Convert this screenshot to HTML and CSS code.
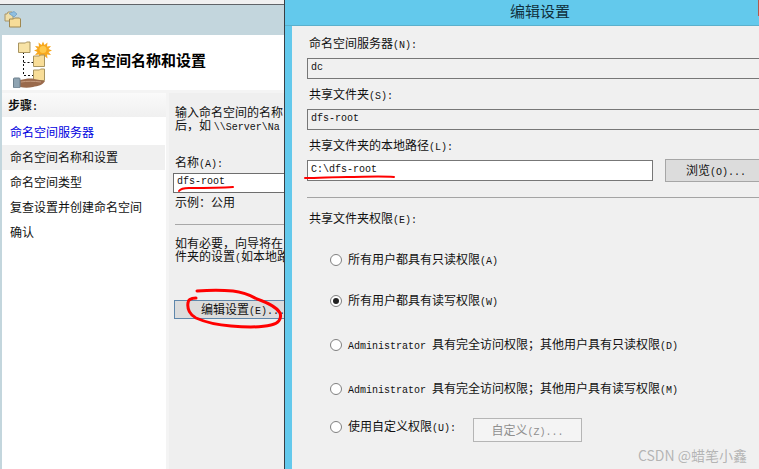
FILE: index.html
```html
<!DOCTYPE html>
<html lang="zh-CN">
<head>
    <meta charset="UTF-8">
    <meta name="viewport" content="width=device-width, initial-scale=1.0">
    <title>编辑设置</title>
    <link rel="stylesheet" href="styles.css">
</head>
<body>
    <!-- wizard behind the dialog -->
    <div class="wizard">
        <div class="wizard-top"></div>
        <div class="toolbar">
            <svg class="toolbar-icon" width="18" height="18" viewBox="0 0 18 18">
                <path d="M1 4h2l1-2h4l1 1v8H1z" fill="#f0dfa8" stroke="#a8966a"/>
                <path d="M5 3.500l5-2 3 2.500-3 3z" fill="#8fbfe0" stroke="#6a9ac0" stroke-width=".7"/>
                <path d="M5.500 9h4l1-1h5l1 1v8h-11z" fill="#f6dc98" stroke="#a08850"/>
            </svg>
        </div>
        <div class="wizard-head">
            <svg class="head-icon" width="44" height="48" viewBox="0 0 44 48">
                <path d="M11.500 12v23.500h10M11.500 22.500h10" fill="none" stroke="#111" stroke-dasharray="2 2"/>
                <path d="M31 1.500l1.500 3.500 3-2.500-.5 4 4-.5-2.500 3 3.500 1.500-3.500 1.500 2.500 3-4-.5.5 4-3-2.500-1.500 3.500-1.500-3.500-3 2.500.5-4-4 .5 2.500-3-3.500-1.500 3.500-1.500-2.500-3 4 .5-.5-4 3 2.500z" fill="#f7a81e"/>
                <circle cx="31" cy="9.500" r="3.500" fill="#ffc94a"/>
                <path d="M6.500 3h7l1-1h3.500v10.500H6.500z" fill="#f8e3a6" stroke="#a89460"/>
                <path d="M21.500 16h6l1-1h4v11.500h-11z" fill="#f8dd98" stroke="#a89460"/>
                <path d="M21.500 30h6l1-1h4v11.500h-11z" fill="#f8dd98" stroke="#a89460"/>
                <path d="M8 40c5-1 10-2 14-1l11 2c-2 4-7 5-12 6-4 1-9 1-13 0z" fill="#9a6a4c"/>
                <path d="M9 42c6-1 12-1 20 0" fill="none" stroke="#c69c80"/>
                <rect x="1.500" y="38" width="6.500" height="10" rx="1" fill="#8fa4b2" stroke="#6c7f8c"/>
            </svg>
            <h1 class="wizard-title">命名空间名称和设置</h1>
        </div>
        <div class="wizard-main">
            <div class="steps">
                <div class="steps-head">步骤<span class="lat">:</span></div>
                <div class="step step-link">命名空间服务器</div>
                <div class="step step-active">命名空间名称和设置</div>
                <div class="step">命名空间类型</div>
                <div class="step">复查设置并创建命名空间</div>
                <div class="step">确认</div>
            </div>
            <div class="wizard-pane">
                <p class="pane-text">输入命名空间的名称</p>
                <p class="pane-text">后&#xFF0C;如 <span class="lat">\\Server\Na</span></p>
                <div class="pane-label">名称<span class="lat">(A):</span></div>
                <div class="name-input lat">dfs-root</div>
                <div class="pane-example">示例&#xFF1A;公用</div>
                <div class="pane-rule"></div>
                <p class="pane-text">如有必要&#xFF0C;向导将在</p>
                <p class="pane-text">件夹的设置<span class="lat">(</span>如本地路</p>
                <button type="button" class="edit-btn">编辑设置<span class="lat">(E)...</span></button>
            </div>
        </div>
    </div>

    <div class="dialog">
        <div class="dialog-title">编辑设置<span class="close-sliver"></span></div>
        <div class="dialog-body">
            <div class="field-label">命名空间服务器<span class="lat">(N):</span></div>
            <div class="field lat">dc</div>
            <div class="field-label">共享文件夹<span class="lat">(S):</span></div>
            <div class="field lat">dfs-root</div>
            <div class="field-label">共享文件夹的本地路径<span class="lat">(L):</span></div>
            <div class="path-row">
                <div class="field field-white lat">C:\dfs-root</div>
                <button type="button" class="browse-btn">浏览<span class="lat">(O)...</span></button>
            </div>
            <div class="dialog-rule"></div>
            <div class="field-label field-label-perm">共享文件夹权限<span class="lat">(E):</span></div>

            <div class="radio-row radio-first"><span class="radio"></span><span class="radio-text">所有用户都具有只读权限<span class="lat">(A)</span></span></div>
            <div class="radio-row radio-gap-a"><span class="radio radio-on"></span><span class="radio-text">所有用户都具有读写权限<span class="lat">(W)</span></span></div>
            <div class="radio-row radio-gap-b"><span class="radio"></span><span class="radio-text"><span class="lat">Administrator </span>具有完全访问权限&#xFF1B;其他用户具有只读权限<span class="lat">(D)</span></span></div>
            <div class="radio-row radio-gap-b"><span class="radio"></span><span class="radio-text"><span class="lat">Administrator </span>具有完全访问权限&#xFF1B;其他用户具有读写权限<span class="lat">(M)</span></span></div>
            <div class="radio-row radio-gap-c"><span class="radio"></span><span class="radio-text">使用自定义权限<span class="lat">(U):</span></span><button type="button" class="custom-btn" disabled>自定义<span class="lat">(Z)...</span></button></div>
        </div>
    </div>

    <!-- red pen marks on top of the screenshot -->
    <svg class="pen" width="759" height="469" viewBox="0 0 759 469">
        <path d="M179 191c2-3 6-3 10-3 14 0 30 0 44-1" />
        <path class="pen-thick" d="M197 291c12-1 26-1 36 0 10 1 17 4 24 8 8 3 19 7 23 14 2 6-2 11-9 12-12 3-28 2-40 1-14-1-26-4-35-8-6-3-9-9-8-15 0-3 3-5 8-5" />
        <path d="M305 178c14 0 28-1 42-1 16 0 32-1 47 0" />
    </svg>

    <div class="watermark">CSDN @蜡笔小鑫</div>
</body>
</html>
```

FILE: styles.css
```css
* {
    margin: 0;
    padding: 0;
    box-sizing: border-box;
}

body {
    width: 759px;
    height: 469px;
    overflow: hidden;
    position: relative;
    background: #f0f0f0;
    font-family: "Noto Sans CJK SC", "Liberation Sans", sans-serif;
    font-size: 12px;
    line-height: 14px;
    color: #111;
}

.lat {
    font-family: "Liberation Mono", monospace;
    font-size: 10px;
    line-height: 10px;
}

/* wizard window */
.wizard {
    position: absolute;
    left: 0;
    top: 0;
    width: 285px;
    height: 469px;
    overflow: hidden;
    border-right: 1px solid #3a3f44;
    background: #c3d6dd;
}

.wizard-top {
    height: 5px;
    background: #f0f0f0;
    border-bottom: 1px solid #606468;
}

.toolbar {
    height: 30px;
    padding: 5px 0 0 4px;
}

.toolbar-icon {
    display: block;
}

.wizard-head {
    height: 55px;
    margin-left: 2px;
    background: #fff;
    display: flex;
    align-items: flex-start;
}

.head-icon {
    margin: 5px 0 0 10px;
    flex: none;
}

.wizard-title {
    margin: 15px 0 0 15px;
    font-size: 15px;
    line-height: 20px;
    font-weight: 700;
    color: #000;
    white-space: nowrap;
}

.wizard-main {
    height: 379px;
    margin-left: 2px;
    padding-top: 3px;
    background: #f4f4f4;
    display: flex;
}

.steps {
    width: 164px;
    background: #fff;
    flex: none;
}

.steps-head {
    height: 24px;
    padding: 5px 0 0 6px;
    font-weight: 700;
    background: linear-gradient(#fafafa, #f0f0f0);
}

.step {
    height: 25px;
    padding: 5px 0 0 8px;
    margin-right: 1px;
    white-space: nowrap;
}

.step-link {
    height: 28px;
    padding-top: 8px;
    color: #0000e0;
}

.step-active {
    background: #f0f0f0;
}

.wizard-pane {
    margin-left: 3px;
    flex: 1;
    min-width: 0;
    padding: 12px 0 0 6px;
    background: #efefef;
    white-space: nowrap;
}

.pane-text {
    height: 13px;
    line-height: 13px;
}

.pane-label {
    margin-top: 24px;
}

.name-input {
    width: 140px;
    height: 20px;
    margin: 3px 0 0 -2px;
    padding: 3px 0 0 3px;
    background: #fff;
    border: 1px solid #6e6e6e;
}

.pane-example {
    margin-top: 2px;
}

.pane-rule {
    width: 140px;
    height: 1px;
    margin: 15px 0 11px;
    background: #a8a8a8;
}

.edit-btn {
    display: block;
    width: 140px;
    height: 19px;
    margin: 38px 0 0 -1px;
    padding-left: 26px;
    text-align: left;
    font: inherit;
    color: #111;
    background: #dcdcdc;
    border: 1px solid #5f87ab;
}

/* dialog on top */
.dialog {
    position: absolute;
    left: 285px;
    top: 0;
    width: 510px;
    height: 469px;
    background: #63c9ec;
    padding-left: 7px;
}

.dialog-title {
    position: relative;
    height: 26px;
    margin-left: -7px;
    padding-top: 1px;
    text-align: center;
    font-size: 15px;
    line-height: 20px;
    color: #10303c;
    border-bottom: 1px solid #5bb0cc;
}

.close-sliver {
    position: absolute;
    left: 473px;
    top: 0;
    width: 2px;
    height: 16px;
    background: #b25a4c;
}

.dialog-body {
    height: 443px;
    padding: 2px 15px 0;
    background: #f0f0f0;
}

.field-label {
    height: 30px;
    padding: 8px 0 0 2px;
}

.field-label-perm {
    height: 33px;
    padding-top: 13px;
}

.field {
    height: 21px;
    padding: 4px 0 0 3px;
    border: 1px solid #777;
    background: #f0f0f0;
}

.path-row {
    display: flex;
    align-items: flex-start;
    height: 23px;
}

.field-white {
    width: 346px;
    flex: none;
    background: #fff;
}

.browse-btn {
    width: 110px;
    height: 23px;
    margin: -1px 0 0 12px;
    padding-right: 8px;
    font: inherit;
    color: #111;
    background: #dcdcdc;
    border: 1px solid #a6a6a6;
}

.dialog-rule {
    height: 1px;
    margin-top: 14px;
    background: #a4a4a4;
}

.radio-row {
    display: flex;
    align-items: flex-start;
    height: 14px;
    padding-left: 23px;
    white-space: pre;
}

.radio-text {
    margin-top: -1px;
}

.radio-first {
    margin-top: 22px;
}

.radio-gap-a {
    margin-top: 27px;
}

.radio-gap-b {
    margin-top: 30px;
}

.radio-gap-c {
    margin-top: 24px;
}

.radio {
    position: relative;
    width: 12px;
    height: 12px;
    margin: 1px 6px 0 0;
    flex: none;
    border: 1px solid #808080;
    border-radius: 50%;
    background: #fff;
}

.radio-on::after {
    content: "";
    position: absolute;
    left: 2px;
    top: 2px;
    width: 6px;
    height: 6px;
    border-radius: 50%;
    background: #222;
}

.custom-btn {
    width: 109px;
    height: 24px;
    margin: -2px 0 0 17px;
    font: inherit;
    color: #8f8f8f;
    background: #f4f4f4;
    border: 1px solid #b5b5b5;
}

/* annotations */
.pen {
    position: absolute;
    left: 0;
    top: 0;
    pointer-events: none;
}

.pen path {
    fill: none;
    stroke: #f00;
    stroke-width: 2;
    stroke-linecap: round;
}

.pen .pen-thick {
    stroke-width: 3;
}

.watermark {
    position: absolute;
    right: 12px;
    top: 446px;
    font-size: 14px;
    line-height: 18px;
    color: rgba(120, 120, 120, 0.5);
    white-space: nowrap;
}
```
